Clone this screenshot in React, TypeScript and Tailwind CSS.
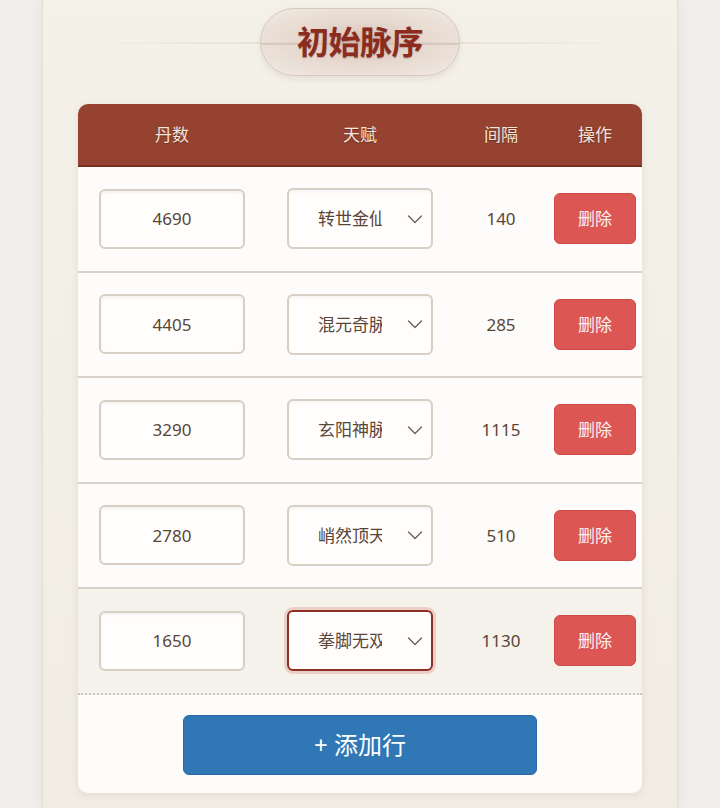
import React from "react";

const rows = [
  { dan: "4690", talent: "转世金仙", gap: "140", focus: false },
  { dan: "4405", talent: "混元奇脉", gap: "285", focus: false },
  { dan: "3290", talent: "玄阳神脉", gap: "1115", focus: false },
  { dan: "2780", talent: "峭然顶天", gap: "510", focus: false },
  { dan: "1650", talent: "拳脚无双", gap: "1130", focus: true },
];

function Chevron() {
  return (
    <svg width="18" height="12" viewBox="0 0 18 12" className="shrink-0">
      <polyline points="2.5,3 9,9.5 15.5,3" fill="none" stroke="#6e5d50" strokeWidth="1.3" strokeLinecap="round" strokeLinejoin="round" />
    </svg>
  );
}

export default function App() {
  return (
    <div
      className="min-h-[808px] w-full bg-[#efeeea] flex justify-center overflow-hidden"
      style={{ fontFamily: '"Noto Sans", "Noto Sans CJK SC", sans-serif' }}
    >
      <div className="w-[636px] min-h-[808px] bg-gradient-to-b from-[#f4f1e9] to-[#f1ede3] border-x border-[#e3ded3] shadow-[0_0_14px_rgba(0,0,0,0.06)] px-[35px] pt-[8px]">
        {/* Title */}
        <div className="relative h-[68px] flex justify-center">
          <div className="absolute left-[12px] right-[12px] top-[34px] h-[2px] bg-gradient-to-r from-transparent via-[#e2d8cd] to-transparent" />
          <div className="relative w-[200px] h-[68px] rounded-full border-[1.5px] border-[#d6c9bd] bg-[radial-gradient(ellipse_at_center,rgba(210,182,170,0.85)_0%,rgba(226,208,198,0.75)_45%,rgba(240,232,224,0.7)_100%)] shadow-[0_3px_6px_rgba(120,90,70,0.12)] flex items-center justify-center">
            <div className="absolute left-0 right-0 top-[34px] h-[1.5px] bg-[#cdbcb0]/60" />
            <span className="relative text-[32px] font-bold text-[#8b2c1f] leading-none [text-shadow:0_1px_1px_rgba(80,20,10,0.25)] tracking-[-0.5px]">
              初始脉序
            </span>
          </div>
        </div>

        {/* Card */}
        <div className="mt-[28px] bg-[#fdfcfa] rounded-[10px] shadow-[0_2px_8px_rgba(120,100,80,0.12)] overflow-hidden">
          {/* header */}
          <div className="grid grid-cols-[188px_188px_94px_94px] h-[63px] bg-[#964230] border-b-2 border-[#7c2e21] items-center text-[17px] text-[#f4e4da] [text-shadow:0_1px_1px_rgba(0,0,0,0.3)]">
            <div className="text-center">丹数</div>
            <div className="text-center">天赋</div>
            <div className="text-center">间隔</div>
            <div className="text-center">操作</div>
          </div>

          {rows.map((r, i) => (
            <div
              key={i}
              className={
                "grid grid-cols-[188px_188px_94px_94px] h-[105.5px] items-center text-[17px] text-[#5a4536] " +
                (r.focus
                  ? "bg-[#f5f2ec] border-b-2 border-dotted border-[#cfc5b9]"
                  : "border-b-2 border-[#d9d2c9]")
              }
            >
              <div className="flex justify-center">
                <div className="w-[146px] h-[60px] rounded-[6px] border-2 border-[#d8cfc4] bg-[#fffefd] shadow-[inset_0_2px_3px_rgba(120,100,80,0.08)] flex items-center justify-center">
                  {r.dan}
                </div>
              </div>
              <div className="flex justify-center">
                <div
                  className={
                    "w-[146px] h-[61px] rounded-[6px] bg-[#fffefd] flex items-center pl-[29px] pr-[7px] " +
                    (r.focus
                      ? "border-2 border-[#8c3026] shadow-[0_0_0_3px_#ecd0c8]"
                      : "border-2 border-[#d8cfc4] shadow-[inset_0_2px_3px_rgba(120,100,80,0.06)]")
                  }
                >
                  <div className="w-[64px] overflow-hidden whitespace-nowrap">{r.talent}</div>
                  <div className="flex-1" />
                  <Chevron />
                </div>
              </div>
              <div className="text-center">{r.gap}</div>
              <div className="flex justify-center">
                <div className="w-[82px] h-[51px] rounded-[6px] bg-[#dc5753] border border-[#cf4946] text-[#fdf1ef] flex items-center justify-center">
                  删除
                </div>
              </div>
            </div>
          ))}

          {/* footer */}
          <div className="flex justify-center pt-[20px] pb-[18px]">
            <div className="w-[354px] h-[60px] rounded-[6px] bg-[#2f78b5] border border-[#2a6ba3] text-white text-[24px] flex items-center justify-center">
              + 添加行
            </div>
          </div>
        </div>
      </div>
    </div>
  );
}
